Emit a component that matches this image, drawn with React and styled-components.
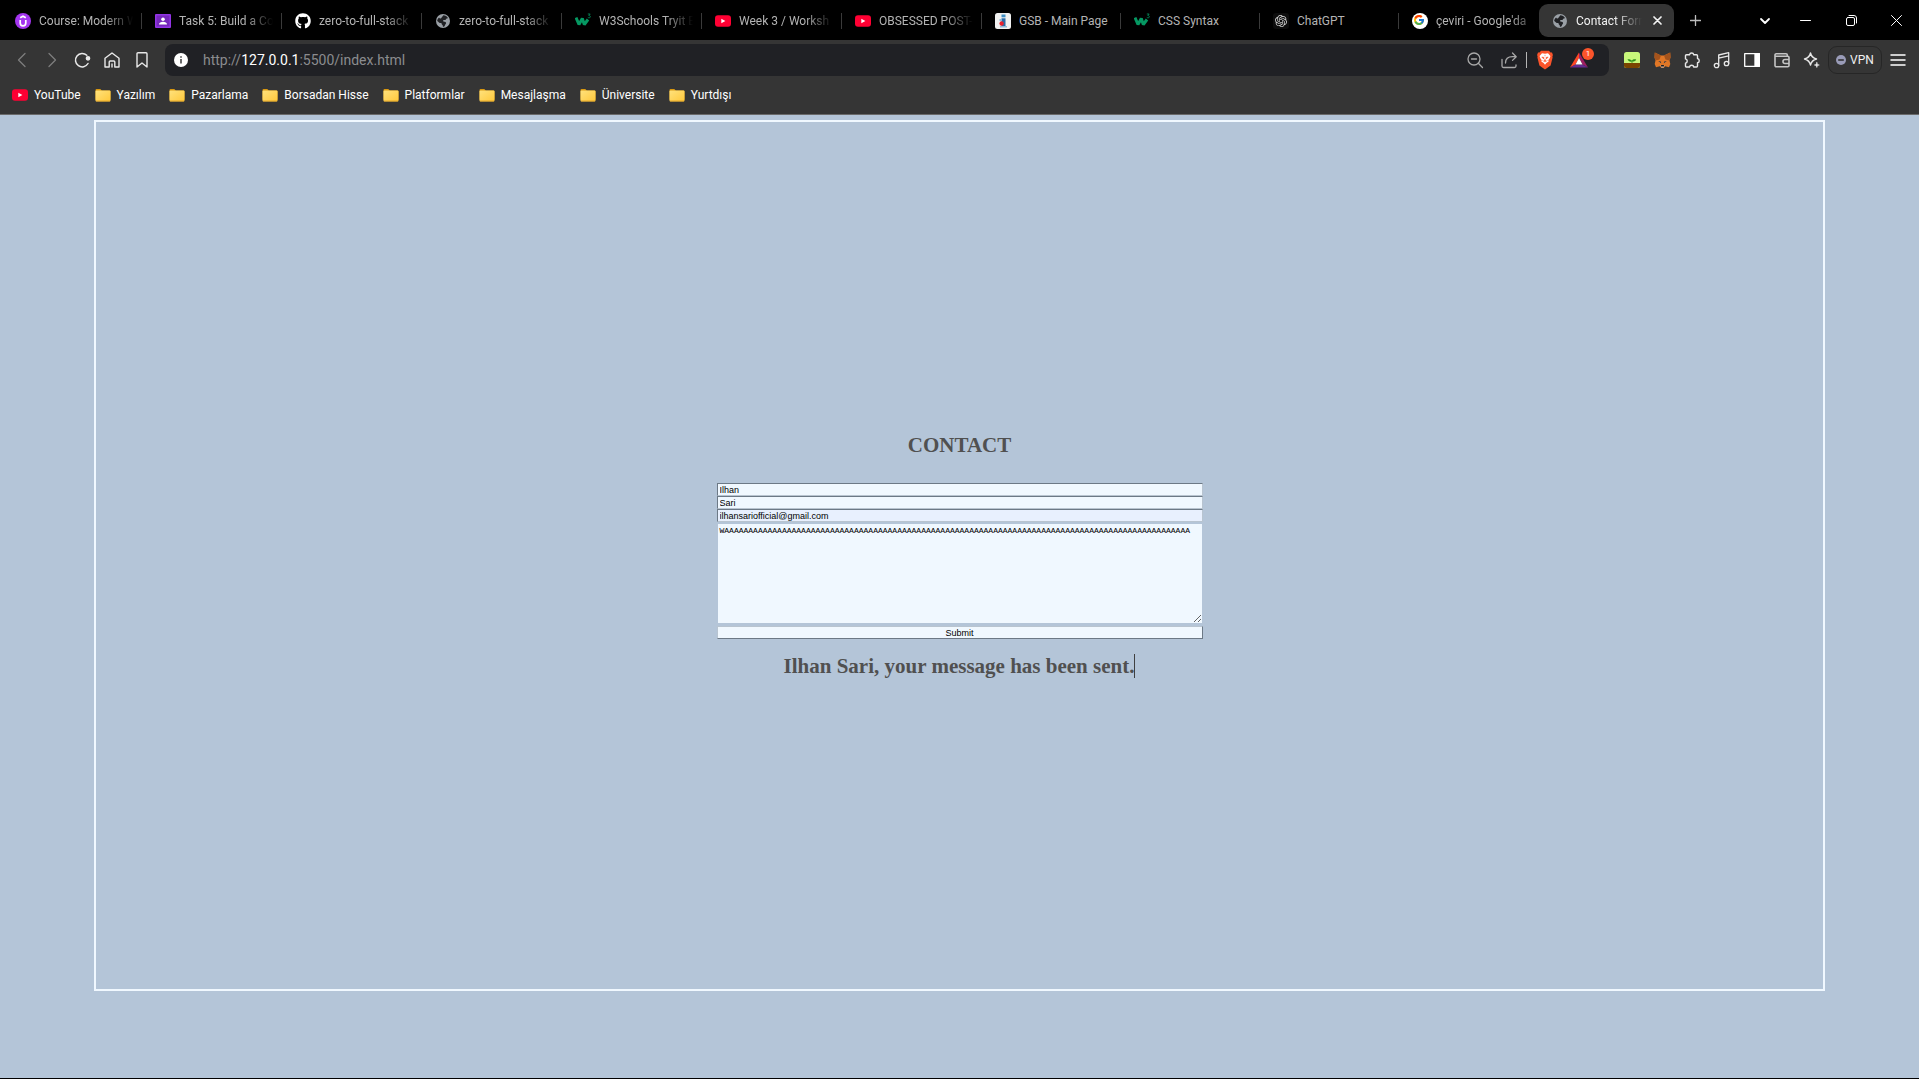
import React from "react";
import styled, { createGlobalStyle } from "styled-components";
import { FaGithub } from "react-icons/fa";
import { FcGoogle } from "react-icons/fc";
import { SiUdemy, SiOpenai } from "react-icons/si";

const GlobalStyle = createGlobalStyle`
  *, *::before, *::after { box-sizing: border-box; }
  body { margin: 0; background: #b4c5d8; }
  button { font: inherit; color: inherit; background: none; border: 0; padding: 0; }
  svg { display: block; flex: none; }
`;

const uiFont = `Roboto, "Noto Sans", sans-serif`;

const Window = styled.div`
  display: flex;
  flex-direction: column;
  min-height: 100vh;
  border-bottom: 1px solid #000;
`;

/* ---------- tab strip ---------- */

const TabStrip = styled.header`
  display: flex;
  align-items: center;
  height: 40px;
  padding: 1px 0 0 2px;
  background: #000;
  color: #fff;
  font: 12px/16px ${uiFont};
`;

const TabList = styled.div`
  display: flex;
  align-items: center;
  min-width: 0;
`;

const Tab = styled.button`
  display: flex;
  align-items: center;
  gap: 8px;
  width: ${(p) => p.$width}px;
  min-width: 0;
  height: 33px;
  padding-left: 13px;
  border-radius: 9px;
  color: ${(p) => (p.$active ? "#f2f2f2" : "#b4b4b4")};
  background: ${(p) => (p.$active ? "#353535" : "none")};
  padding-right: ${(p) => (p.$active ? 10 : 0)}px;

  &::after {
    content: ${(p) => (p.$divider ? '""' : "none")};
    width: 1px;
    height: 16px;
    background: #3a3a3a;
  }
`;

const TabLabel = styled.span`
  flex: 1;
  min-width: 0;
  overflow: hidden;
  white-space: nowrap;
  text-align: left;
  mask-image: ${(p) => (p.$fade ? "linear-gradient(to left, transparent, #000 28px)" : "none")};
`;

const StripButton = styled.button`
  display: grid;
  place-items: center;
  width: ${(p) => p.$width}px;
  height: 39px;
`;

const CaptionButtons = styled.div`
  display: flex;
  margin-left: auto;
`;

/* ---------- toolbar ---------- */

const Chrome = styled.nav`
  background: #353535;
  border-bottom: 1px solid #6a6a6a;
  color: #f0f0f0;
  font-family: ${uiFont};
`;

const Toolbar = styled.div`
  display: flex;
  align-items: center;
  height: 40px;
  padding: 0 6px 0 7px;
`;

const ToolButton = styled.button`
  position: relative;
  display: grid;
  place-items: center;
  width: ${(p) => p.$width || 30}px;
  height: 32px;
  color: ${(p) => p.$color || "#e8e8e8"};
`;

const AddressBar = styled.div`
  display: flex;
  align-items: center;
  gap: 1px;
  flex: 1;
  min-width: 0;
  height: 32px;
  margin: 0 8px;
  padding-right: 14px;
  border-radius: 8px;
  background: #202125;
`;

const Url = styled.div`
  flex: 1;
  min-width: 0;
  margin-left: 5px;
  color: #8b8c8f;
  font-size: 14px;
  line-height: 20px;
  white-space: nowrap;
  overflow: hidden;

  b { color: #fff; font-weight: 400; }
`;

const Divider = styled.span`
  width: 1px;
  height: 16px;
  background: #b5b5b5;
`;

const Badge = styled.span`
  position: absolute;
  top: 4px;
  right: 1px;
  width: 12px;
  height: 12px;
  border-radius: 6px;
  background: #fb542b;
  color: #fff;
  font-size: 8px;
  line-height: 12px;
  text-align: center;
`;

const VpnButton = styled.button`
  display: flex;
  align-items: center;
  justify-content: center;
  gap: 4px;
  width: 54px;
  height: 28px;
  margin: 0 1px;
  border: 1px solid #262626;
  border-radius: 9px;
  font-size: 12px;
  line-height: 16px;
`;

/* ---------- bookmarks ---------- */

const Bookmarks = styled.div`
  display: flex;
  gap: 14px;
  height: 34px;
  padding: 6px 12px 10px;
  font-size: 12px;
  line-height: 18px;
`;

const Bookmark = styled.a`
  display: flex;
  align-items: center;
  gap: 6px;
  color: #fff;
  text-decoration: none;
  white-space: nowrap;
`;

/* ---------- contact page ---------- */

const Page = styled.main`
  flex: 1;
  display: flex;
  flex-direction: column;
  align-items: center;
  padding: 5px 0 87px;
  background: #b4c5d8;
  color: #505050;
  font-family: "Liberation Serif", "Times New Roman", serif;
`;

const Frame = styled.section`
  box-sizing: content-box;
  flex: 1;
  width: 90%;
  display: flex;
  flex-direction: column;
  align-items: center;
  justify-content: center;
  border: 2px solid aliceblue;
`;

const Title = styled.h1`
  margin: 0 0 26px;
  font-size: 21px;
  line-height: 24px;
`;

const Form = styled.form`
  display: flex;
  flex-direction: column;
  width: 486px;
  max-width: 100%;
  color: #000;
  font: 9px/10px "Liberation Sans", Arial, sans-serif;
`;

const Field = styled.input`
  height: 13px;
  padding: 0 2px;
  border: 1px solid;
  border-color: #6c7986 #b8c4d0 #b8c4d0 #6c7986;
  border-radius: 0;
  background: ${(p) => (p.$filled ? "#e8f0fe" : "aliceblue")};
  color: inherit;
  font: inherit;
  outline: 0;
`;

const Message = styled.textarea`
  height: 101px;
  margin: 1px 0 2px;
  padding: 2px;
  border: 1px solid #b4c5d8;
  border-radius: 0;
  background: aliceblue;
  color: #000;
  font: 8px/10px "Liberation Mono", "Courier New", monospace;
  overflow: hidden;
  outline: 0;
`;

const Submit = styled.button`
  height: 13px;
  border: 1px solid;
  border-color: #b8c4d0 #6c7986 #6c7986 #b8c4d0;
  background: aliceblue;
  line-height: 10px;
`;

const Notice = styled.h2`
  margin: 15px 0 0;
  border-right: 1px solid #404040;
  font-size: 21px;
  line-height: 24px;
`;

/* ---------- icons ---------- */

const Line = ({ size = 18, box = 18, width = 1.3, children, ...rest }) => (
  <svg width={size} height={size} viewBox={`0 0 ${box} ${box}`} fill="none" stroke="currentColor"
    strokeWidth={width} strokeLinecap="round" strokeLinejoin="round" {...rest}>
    {children}
  </svg>
);

const UdemyIcon = () => (
  <svg width="16" height="16" viewBox="0 0 16 16">
    <circle cx="8" cy="8" r="8" fill="#a435f0" />
    <path d="M5.200 4.800 8 3.200l2.800 1.600M5.200 7v3a2.800 2.800 0 0 0 5.600 0V7" fill="none" stroke="#fff" strokeWidth="1.700" />
  </svg>
);

const ClassroomIcon = () => (
  <svg width="16" height="16" viewBox="0 0 16 16">
    <rect y="1" width="16" height="14" rx="1" fill="#9334e6" />
    <rect x="1.500" y="2.500" width="13" height="11" fill="#7627bb" />
    <circle cx="8" cy="6.200" r="1.800" fill="#fff" />
    <path d="M4 11.500c0-2 2-2.800 4-2.800s4 .8 4 2.800z" fill="#fff" />
  </svg>
);

const GlobeIcon = () => (
  <svg width="16" height="16" viewBox="0 0 16 16">
    <circle cx="8" cy="8" r="7" fill="#9aa0a6" />
    <path d="M8.300 2.300c2 0 3.900 1.200 4.800 3-.9-.3-1.700.1-1.900.8-.2.800-.8 1-1.600.9-.9-.1-1.600.2-1.500 1 .1.700 1 .7 1.800.8.9.2 1.400.9 1.100 1.700-.3.800-.9 1-1.100 1.900-.2.700-.9 1.300-2 1.300.1-.9-.1-1.500-.7-1.900-.6-.4-.8-1-.7-1.700-1.200.1-2.200-.2-2.800-.9-.5-.6-1-.9-1.500-1.100.1-1.500.8-2.700 1.900-3.600.2.800.7 1.200 1.500 1.100.8-.1.800-1 1.400-1.500.5-.4.900-.9 1.300-1.800z" fill="#202124" />
  </svg>
);

const W3Icon = () => (
  <svg width="16" height="16" viewBox="0 0 16 16" fill="none" stroke="#059862">
    <path d="M1 4.500 4 11.500 7.300 5.500 9.300 11.500 13 6.500" strokeWidth="3" strokeLinejoin="bevel" />
    <path d="M12.800 1h2.400l-1.400 1.600c1 0 1.600.5 1.600 1.200 0 1-1.700 1.300-2.600.6" strokeWidth=".8" />
  </svg>
);

const YouTubeIcon = () => (
  <svg width="16" height="16" viewBox="0 0 16 16">
    <rect y="2.300" width="16" height="11.500" rx="3" fill="#ff0033" />
    <path d="M6.300 5.700v4.600L10.400 8z" fill="#fff" />
  </svg>
);

const GsbIcon = () => (
  <svg width="16" height="16" viewBox="0 0 16 16">
    <rect width="16" height="16" rx="2.500" fill="#f1f1f1" />
    <rect x="6.500" y="1.500" width="4" height="2.800" fill="#3f8fc4" />
    <rect x="6.500" y="5.300" width="4" height="8.700" fill="#2b6ca8" />
    <path d="M4.500 6h2v2h-2zM5 13h7v1.400H5z" fill="#8fb9d8" />
    <circle cx="6.600" cy="10.500" r="2.200" fill="#e8202c" />
  </svg>
);

const ChatGptIcon = () => (
  <svg width="16" height="16" viewBox="0 0 16 16">
    <rect width="16" height="16" rx="3" fill="#0d0d0d" />
    <SiOpenai x="2" y="2" width="12" height="12" color="#d8d8d8" />
  </svg>
);

const GoogleIcon = () => (
  <svg width="16" height="16" viewBox="0 0 16 16">
    <circle cx="8" cy="8" r="8" fill="#fff" />
    <FcGoogle x="1" y="1" width="14" height="14" />
  </svg>
);

const FolderIcon = () => (
  <svg width="16" height="16" viewBox="0 0 16 16">
    <path d="M.5 3.200a1.200 1.200 0 0 1 1.200-1.200h3.600l1.500 1.500h7.500a1.200 1.200 0 0 1 1.200 1.200v8H.5z" fill="#d9980f" />
    <rect x=".5" y="3.400" width="15" height="11" rx="1" fill="url(#folderFill)" />
    <path d="M1 14h14" stroke="#e0a020" strokeWidth=".8" />
    <defs>
      <linearGradient id="folderFill" x1="0" y1="0" x2="1" y2="1">
        <stop offset="0" stopColor="#ffe27d" />
        <stop offset="1" stopColor="#ffc83a" />
      </linearGradient>
    </defs>
  </svg>
);

const BatIcon = () => (
  <svg width="18" height="16" viewBox="0 0 18 16">
    <path d="M9 .5 0 15.500l5.500-3L9 6z" fill="#ff4724" />
    <path d="M9 .5v5.500l3.500 6.500 5.500 3z" fill="#9e1f63" />
    <path d="M0 15.500h18l-5.500-3h-7z" fill="#662d91" />
    <path d="m9 6 3.500 6.500h-7z" fill="#fff" />
  </svg>
);

const SproutIcon = () => (
  <svg width="16" height="16" viewBox="0 0 16 16">
    <rect width="16" height="16" rx="2.500" fill="#c8f77a" />
    <path d="M0 11h16v2.500a2.500 2.500 0 0 1-2.500 2.500h-11A2.500 2.500 0 0 1 0 13.500z" fill="#7a4400" />
    <path d="M7.600 11V9.600C5.600 9.800 4.200 9 3.500 7.200c2-.2 3.600.3 4.400 1.500.8-1.200 2.200-1.600 4.300-1.200-.5 1.400-1.900 2.200-3.800 2.100V11z" fill="#2f8f1c" />
  </svg>
);

const FoxIcon = () => (
  <svg width="17" height="16" viewBox="0 0 17 16">
    <path d="M.8.5 7 3.600h3L16.200.5l.3 5-1 3 .8 3.500-1.300 3.300-3.800-1L9.800 15.800H7.200L5.800 14.300 2 15.300.7 12l.8-3.500-1-3z" fill="#e17726" />
    <path d="M.8.5 7 3.600 5.500 7.500 1.500 8.500.5 5.500zM16.200.5 10 3.600l1.500 3.900 4 1 1-3z" fill="#a4531c" />
    <path d="m4.200 9 2.600.6.4 1.600zM12.800 9l-2.600.6-.4 1.600z" fill="#233447" />
    <path d="M6.500 13.200h4l-.7 2.300H7.200z" fill="#d5bfb2" />
    <path d="M7.200 13h2.600l.4 1.400H6.800z" fill="#1d1d1d" />
  </svg>
);

const BraveIcon = () => (
  <svg width="18" height="20" viewBox="0 0 18 20">
    <path d="M5 .8h8l1.500 1.600 1.500.1.900 2.500-.5 1.500.2 1-2 8L9 19.500l-5.600-4-2-8 .2-1-.5-1.500L2 2.500l1.500-.1z" fill="#fb542b" />
    <path d="m9 3.800 3-.6 2.400 2.700-.6 2.100-1.500 2.200.4 1.400-2.300 1.400L9 14.800 7.600 13l-2.300-1.400.4-1.400L4.200 8l-.6-2.100L6 3.200z" fill="#fff" />
    <path d="m5.800 7 2.200.5-.3 1.500zM12.200 7l-2.200.5.3 1.500zM8.300 9.800h1.400L9 12zM9 4.800v1.500M6.500 10.500l2 1.200M11.500 10.500l-2 1.200" fill="#fb542b" stroke="#fb542b" strokeWidth=".6" />
  </svg>
);

const InfoIcon = () => (
  <svg width="14" height="14" viewBox="0 0 14 14">
    <circle cx="7" cy="7" r="7" fill="#fff" />
    <path d="M7 3.200v1.500M7 6v4.500" stroke="#444" strokeWidth="1.600" />
  </svg>
);

const BackIcon = () => <Line><path d="M12 2.500 5.500 9l6.500 6.500" /></Line>;
const ForwardIcon = () => <Line><path d="m6 2.500 6.500 6.500L6 15.500" /></Line>;
const ReloadIcon = () => (
  <Line width={1.5}>
    <path d="M13.800 4.300A6.700 6.700 0 1 0 15 12.500" />
    <circle cx="15" cy="7.300" r="1.600" fill="currentColor" />
  </Line>
);
const HomeIcon = () => (
  <Line width={1.4}>
    <path d="M2 7.300 9 2l7 5.300V16h-4.200v-5a1 1 0 0 0-1-1H7.200a1 1 0 0 0-1 1v5H2zM9 16v-3" />
  </Line>
);
const BookmarkIcon = () => <Line width={1.4}><path d="M4 2.700a1 1 0 0 1 1-1h8a1 1 0 0 1 1 1V16l-5-4-5 4z" /></Line>;
const ZoomOutIcon = () => <Line><circle cx="8" cy="8" r="6" /><path d="M12.300 12.300 16.500 16.500M5.500 8h5" /></Line>;
const ShareIcon = () => <Line><path d="M2 8.500V15a1.500 1.500 0 0 0 1.500 1.500h11A1.500 1.500 0 0 0 16 15v-1M5.500 12c0-4 2.500-6.300 7-6.300H16M12.500 2 16.200 5.700l-3.700 3.700" /></Line>;
const PuzzleIcon = () => (
  <Line width={1.4}>
    <path d="M3.500 3.800h3a2.200 2.200 0 0 1 4.300 0h2.700a1 1 0 0 1 1 1v2.700a2.200 2.200 0 0 1 0 4.300v3.200a1 1 0 0 1-1 1h-2.700a2.200 2.200 0 0 0-4.300 0h-3a1 1 0 0 1-1-1v-2.800a2.200 2.200 0 0 0 0-4.300V4.800a1 1 0 0 1 1-1z" />
  </Line>
);
const MusicIcon = () => <Line><circle cx="3.500" cy="14.500" r="2.200" /><circle cx="13.500" cy="12.500" r="2.200" /><path d="M5.700 14.500V4l10-2.300v10.800M5.700 7.200l10-2.300" /></Line>;
const SidebarIcon = () => (
  <Line width={1.3}>
    <rect x="1.700" y="2.700" width="14.600" height="12.600" />
    <path d="M12 2.700h4.300v12.600H12z" fill="currentColor" />
  </Line>
);
const WalletIcon = () => (
  <Line width={1.6}>
    <path d="M2 5V4a1.300 1.300 0 0 1 1.300-1.300H13A1.300 1.300 0 0 1 14.300 4v1.300M2 5v9.500a1.300 1.300 0 0 0 1.300 1.300h11.400a1.300 1.300 0 0 0 1.300-1.300V6.600a1.300 1.300 0 0 0-1.300-1.300H2.500M16 8.500h-4a2 2 0 0 0 0 4h4z" />
  </Line>
);
const SparkleIcon = () => (
  <Line width={1.4}>
    <path d="M7.500 2c.8 3.600 2 5 6 6-4 1-5.200 2.400-6 6-.8-3.600-2-5-6-6 4-1 5.200-2.400 6-6z" />
    <path d="M13.800 11.500c.4 1.600.9 2.100 2.500 2.500-1.600.4-2.100.9-2.500 2.500-.4-1.600-.9-2.100-2.500-2.500 1.600-.4 2.100-.9 2.500-2.500z" fill="currentColor" strokeWidth=".6" />
  </Line>
);
const MenuIcon = () => <Line width={1.5}><path d="M2 4h14M2 9h14M2 14h14" /></Line>;
const VpnIcon = () => (
  <svg width="10" height="10" viewBox="0 0 10 10">
    <circle cx="5" cy="5" r="5" fill="#9a9cb8" />
    <path d="M2.200 5h5.600" stroke="#2a2a2a" strokeWidth="1.500" />
  </svg>
);
const CloseTabIcon = () => <Line size={9} box={9} width={1.7}><path d="m1 1 7 7M8 1 1 8" /></Line>;
const PlusIcon = () => <Line size={11} box={11} color="#bdbdbd"><path d="M5.500.5v10M.5 5.500h10" /></Line>;
const ChevronIcon = () => <Line size={12} box={12} width={1.8}><path d="m2 4 4 4 4-4" /></Line>;
const MinimizeIcon = () => <Line size={11} box={11} width={1}><path d="M.5 5.500h10" /></Line>;
const RestoreIcon = () => <Line size={11} box={11} width={1}><rect x=".5" y="2.500" width="8" height="8" rx="1.500" /><path d="M3 .5h5a2.500 2.500 0 0 1 2.500 2.500v5" /></Line>;
const CloseIcon = () => <Line size={11} box={11} width={1}><path d="m.5.5 10 10M10.500.5l-10 10" /></Line>;

/* ---------- data ---------- */

const tabs = [
  { icon: <UdemyIcon />, label: "Course: Modern W", fade: true, width: 140 },
  { icon: <ClassroomIcon />, label: "Task 5: Build a Co", fade: true, width: 140 },
  { icon: <FaGithub size={16} color="#fff" />, label: "zero-to-full-stack", fade: true, width: 140 },
  { icon: <GlobeIcon />, label: "zero-to-full-stack", fade: true, width: 140 },
  { icon: <W3Icon />, label: "W3Schools Tryit E", fade: true, width: 140 },
  { icon: <YouTubeIcon />, label: "Week 3 / Worksh", fade: true, width: 140 },
  { icon: <YouTubeIcon />, label: "OBSESSED POST-", fade: true, width: 140 },
  { icon: <GsbIcon />, label: "GSB - Main Page", width: 139 },
  { icon: <W3Icon />, label: "CSS Syntax", width: 139 },
  { icon: <ChatGptIcon />, label: "ChatGPT", width: 139 },
  { icon: <GoogleIcon />, label: "çeviri - Google'da", fade: true, width: 140, last: true },
];

const bookmarks = ["Yazılım", "Pazarlama", "Borsadan Hisse", "Platformlar", "Mesajlaşma", "Üniversite", "Yurtdışı"];

const messageText = "W" + "A".repeat(97);

export default function App() {
  return (
    <Window>
      <GlobalStyle />
      <TabStrip>
        <TabList role="tablist">
          {tabs.map((t, i) => (
            <Tab key={i} role="tab" $width={t.width} $divider={!t.last}>
              {t.icon}
              <TabLabel $fade={t.fade}>{t.label}</TabLabel>
            </Tab>
          ))}
          <Tab as="div" role="tab" aria-selected="true" $width={135} $active>
            <GlobeIcon />
            <TabLabel $fade>Contact Form</TabLabel>
            <StripButton $width={14} aria-label="Close tab"><CloseTabIcon /></StripButton>
          </Tab>
        </TabList>
        <StripButton $width={42} aria-label="New tab"><PlusIcon /></StripButton>
        <CaptionButtons>
          <StripButton $width={34} aria-label="Search tabs"><ChevronIcon /></StripButton>
          <StripButton $width={46} aria-label="Minimize"><MinimizeIcon /></StripButton>
          <StripButton $width={46} aria-label="Restore"><RestoreIcon /></StripButton>
          <StripButton $width={45} aria-label="Close"><CloseIcon /></StripButton>
        </CaptionButtons>
      </TabStrip>

      <Chrome>
        <Toolbar>
          <ToolButton $color="#7d7d7d" aria-label="Back"><BackIcon /></ToolButton>
          <ToolButton $color="#7d7d7d" aria-label="Forward"><ForwardIcon /></ToolButton>
          <ToolButton aria-label="Reload"><ReloadIcon /></ToolButton>
          <ToolButton aria-label="Home"><HomeIcon /></ToolButton>
          <ToolButton aria-label="Bookmark"><BookmarkIcon /></ToolButton>
          <AddressBar>
            <ToolButton $width={32} aria-label="Site information"><InfoIcon /></ToolButton>
            <Url role="textbox" aria-label="Address">http://<b>127.0.0.1</b>:5500/index.html</Url>
            <ToolButton $width={34} $color="#a8a8a8" aria-label="Zoom"><ZoomOutIcon /></ToolButton>
            <ToolButton $width={32} $color="#a8a8a8" aria-label="Share"><ShareIcon /></ToolButton>
            <Divider />
            <ToolButton $width={34} aria-label="Brave Shields"><BraveIcon /></ToolButton>
            <ToolButton $width={32} aria-label="Rewards"><BatIcon /><Badge>1</Badge></ToolButton>
          </AddressBar>
          <ToolButton aria-label="Forest"><SproutIcon /></ToolButton>
          <ToolButton aria-label="MetaMask"><FoxIcon /></ToolButton>
          <ToolButton aria-label="Extensions"><PuzzleIcon /></ToolButton>
          <ToolButton aria-label="Playlist"><MusicIcon /></ToolButton>
          <ToolButton $color="#fff" aria-label="Sidebar"><SidebarIcon /></ToolButton>
          <ToolButton $color="#c4c4c4" aria-label="Wallet"><WalletIcon /></ToolButton>
          <ToolButton aria-label="Leo"><SparkleIcon /></ToolButton>
          <VpnButton><VpnIcon />VPN</VpnButton>
          <ToolButton $color="#fff" aria-label="Menu"><MenuIcon /></ToolButton>
        </Toolbar>
        <Bookmarks>
          <Bookmark href="#youtube"><YouTubeIcon />YouTube</Bookmark>
          {bookmarks.map((name) => (
            <Bookmark key={name} href={`#${name}`}><FolderIcon />{name}</Bookmark>
          ))}
        </Bookmarks>
      </Chrome>

      <Page>
        <Frame>
          <Title>CONTACT</Title>
          <Form onSubmit={(e) => e.preventDefault()}>
            <Field aria-label="First name" defaultValue="Ilhan" />
            <Field aria-label="Last name" defaultValue="Sari" />
            <Field aria-label="Email" type="email" $filled defaultValue="ilhansariofficial@gmail.com" />
            <Message aria-label="Message" spellCheck={false} defaultValue={messageText} />
            <Submit type="submit">Submit</Submit>
          </Form>
          <Notice>Ilhan Sari, your message has been sent.</Notice>
        </Frame>
      </Page>
    </Window>
  );
}
